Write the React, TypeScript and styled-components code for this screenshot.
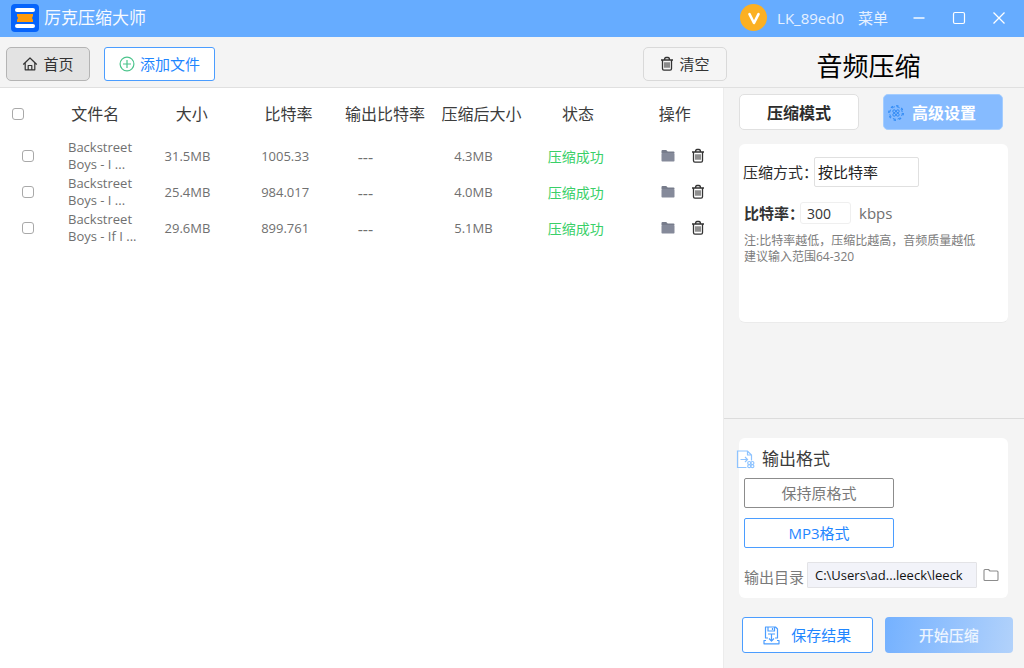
import React from "react";
import styled, { createGlobalStyle, css } from "styled-components";

const GlobalStyle = createGlobalStyle`
  *, *::before, *::after { box-sizing: border-box; }
  body { margin: 0; background: #f4f4f4; }
  body, button, input, select {
    font-family: "Open Sans", "Noto Sans CJK SC", sans-serif;
  }
  button { cursor: pointer; }
  svg { display: block; flex: none; }
`;

const blue = "#1f86ff";

const Window = styled.div`
  display: flex;
  flex-direction: column;
  min-height: 100vh;
`;

const TitleBar = styled.header`
  display: flex;
  align-items: center;
  height: 37px;
  padding: 0 17px 2px 11px;
  background: #66acff;
  color: #fff;
`;

const AppName = styled.span`
  margin: 0 auto 0 5px;
  font-size: 17px;
  line-height: 24px;
  opacity: 0.95;
`;

const Avatar = styled.span`
  display: grid;
  place-items: center;
  width: 27px;
  height: 27px;
  margin-right: 10px;
  border-radius: 50%;
  background: #fbb023;
`;

const Account = styled.span`
  font-size: 15px;
  line-height: 20px;
  color: #e6f1ff;
`;

const MenuButton = styled.button`
  margin: 0 23px 0 14px;
  padding: 0;
  border: 0;
  background: none;
  color: #e6f1ff;
  font-size: 15px;
  line-height: 20px;
`;

const WindowControls = styled.div`
  display: flex;
  gap: 24px;
`;

const WindowButton = styled.button`
  display: grid;
  place-items: center;
  width: 16px;
  height: 16px;
  padding: 0;
  border: 0;
  background: none;
  color: #fff;
`;

const Toolbar = styled.div`
  display: flex;
  align-items: center;
  height: 51px;
  padding: 4px 0 0 6px;
  border-bottom: 1px solid #e0e0e0;
  background: #f4f4f4;
`;

const ToolButton = styled.button<{ $kind: "active" | "outline" | "plain" }>`
  display: flex;
  align-items: center;
  justify-content: center;
  gap: 5px;
  min-width: 84px;
  height: 34px;
  padding: 0 14px;
  border: 1px solid #d9d9d9;
  border-radius: 5px;
  background: #f5f5f5;
  color: #333;
  font-size: 15px;
  line-height: 20px;
  ${(p) =>
    p.$kind === "active" &&
    css`
      border-color: #b4b4b4;
      background: #e3e3e3;
    `}
  ${(p) =>
    p.$kind === "outline" &&
    css`
      margin: 0 auto 0 14px;
      border-color: #4b9dff;
      border-radius: 3px;
      background: #fff;
      color: ${blue};
    `}
`;

const PageTitle = styled.h1`
  width: 297px;
  margin: 0;
  padding: 4px 14px 0 0;
  text-align: center;
  color: #000;
  font-size: 26px;
  font-weight: 400;
  line-height: 36px;
`;

const Body = styled.div`
  display: flex;
  flex: 1;
`;

const Files = styled.main`
  flex: 1;
  min-width: 0;
  background: #fff;
`;

const FileTable = styled.table`
  width: 100%;
  border-collapse: collapse;
  table-layout: fixed;
`;

const HeadCell = styled.th`
  height: 50px;
  padding: 2px 0 0;
  color: #3c3c3c;
  font-size: 16px;
  font-weight: 400;
  line-height: 24px;
  white-space: nowrap;
`;

const CheckHead = styled(HeadCell)`
  width: 47px;
  padding-left: 12px;
  text-align: left;
`;

const Cell = styled.td<{ $done?: boolean }>`
  height: 36px;
  padding: 0 0 0 ${(p) => (p.$done ? "18px" : "21px")};
  color: ${(p) => (p.$done ? "#39d068" : "#707070")};
  font-size: ${(p) => (p.$done ? "14px" : "13px")};
  line-height: 17px;
  white-space: nowrap;
`;

const EmptyCell = styled(Cell)`
  padding-top: 2px;
  font-size: 16px;
`;

const CheckCell = styled(Cell)`
  padding-left: 22px;
`;

const Checkbox = styled.input`
  display: block;
  appearance: none;
  width: 12px;
  height: 12px;
  margin: 0;
  border: 1px solid #a9a9a9;
  border-radius: 3px;
  background: #fff;
  &:checked { background: ${blue}; }
`;

const FileName = styled.span`
  display: block;
  width: 74px;
  white-space: normal;
`;

const Actions = styled.div`
  display: flex;
  gap: 14px;
  padding-left: 13px;
`;

const IconButton = styled.button`
  display: grid;
  place-items: center;
  width: 16px;
  height: 16px;
  padding: 0;
  border: 0;
  background: none;
  color: #333;
`;

const Sidebar = styled.aside`
  display: flex;
  flex-direction: column;
  width: 301px;
  border-left: 1px solid #ececec;
  background: #f4f4f4;
`;

const Settings = styled.section`
  display: flex;
  flex-direction: column;
  gap: 14px;
  min-height: 331px;
  padding: 6px 16px 16px 15px;
  border-bottom: 1px solid #dcdcdc;
`;

const Tabs = styled.div`
  display: flex;
  justify-content: space-between;
  padding-right: 5px;
`;

const Tab = styled.button<{ $active?: boolean }>`
  display: flex;
  align-items: center;
  justify-content: center;
  gap: 8px;
  width: 120px;
  height: 36px;
  padding: 2px 0 0;
  border: 1px solid ${(p) => (p.$active ? "#a4cdff" : "#e0e0e0")};
  border-radius: 5px;
  background: ${(p) => (p.$active ? "#86bbff" : "#fff")};
  color: ${(p) => (p.$active ? "#fff" : "#2c2c2c")};
  font-size: 16px;
  font-weight: 700;
  line-height: 24px;
  ${(p) => p.$active && "padding-right: 22px;"}
`;

const Card = styled.div`
  border-radius: 6px;
  background: #fff;
`;

const SettingsCard = styled(Card)`
  min-height: 179px;
  padding: 13px 4px;
  border-bottom: 1px solid #ebebeb;
`;

const Field = styled.div`
  display: flex;
  align-items: center;
`;

const MethodLabel = styled.label`
  width: 71px;
  color: #2c2c2c;
  font-size: 15px;
  line-height: 24px;
  white-space: nowrap;
`;

const MethodSelect = styled.select`
  appearance: none;
  width: 105px;
  height: 30px;
  padding: 0 3px;
  border: 1px solid #e0e0e0;
  border-radius: 2px;
  background: #fff;
  color: #222;
  font-size: 15px;
`;

const RateField = styled(Field)`
  margin-top: 15px;
  padding-left: 1px;
`;

const RateLabel = styled.label`
  width: 56px;
  color: #333;
  font-size: 15px;
  font-weight: 700;
  line-height: 22px;
  white-space: nowrap;
`;

const RateInput = styled.input`
  width: 51px;
  height: 22px;
  margin-right: 8px;
  padding: 0 6px;
  border: 1px solid #efefef;
  border-radius: 3px;
  background: #fff;
  color: #333;
  font-size: 14px;
`;

const Unit = styled.span`
  color: #707070;
  font-size: 15px;
  line-height: 22px;
`;

const Note = styled.p`
  margin: 9px 0 0 1px;
  color: #7c7c7c;
  font-size: 12px;
  line-height: 16px;
  white-space: nowrap;
`;

const Output = styled.section`
  padding: 19px 11px 15px 15px;
`;

const OutputCard = styled(Card)`
  margin-right: 5px;
  padding: 8px 9px 10px 5px;
`;

const OutputHeading = styled.h2`
  display: flex;
  align-items: center;
  gap: 7px;
  margin: 0 0 6px -8px;
  color: #3c3c3c;
  font-size: 17px;
  font-weight: 400;
  line-height: 26px;
`;

const FormatButton = styled.button<{ $selected?: boolean }>`
  display: block;
  width: 150px;
  height: 30px;
  margin-bottom: 10px;
  padding: 0;
  border: 1px solid ${(p) => (p.$selected ? "#4b9dff" : "#8c8c8c")};
  border-radius: 2px;
  background: #fff;
  color: ${(p) => (p.$selected ? blue : "#7a7a7a")};
  font-size: 15px;
  line-height: 20px;
`;

const PathField = styled(Field)`
  margin-top: 14px;
`;

const PathLabel = styled.label`
  width: 63px;
  padding-top: 4px;
  color: #7a7a7a;
  font-size: 15px;
  line-height: 22px;
  white-space: nowrap;
`;

const PathInput = styled.input`
  flex: 1;
  min-width: 0;
  height: 26px;
  margin-right: 6px;
  padding: 0 7px;
  border: 1px solid #e3e3e6;
  border-radius: 1px;
  background: #f2f3f9;
  color: #111;
  font-size: 13px;
`;

const Footer = styled.div`
  display: flex;
  gap: 12px;
  margin: 19px 0 0 3px;
`;

const FooterButton = styled.button<{ $primary?: boolean }>`
  display: flex;
  flex: 1;
  align-items: center;
  justify-content: center;
  gap: 11px;
  height: 36px;
  padding: 0;
  border: 1px solid #4b9dff;
  border-radius: 3px;
  background: #fff;
  color: ${blue};
  font-size: 15px;
  line-height: 20px;
  ${(p) =>
    p.$primary &&
    css`
      border: 0;
      border-radius: 4px;
      background: linear-gradient(100deg, #74b1ff, #b2d2fb);
      color: #edf5ff;
      font-weight: 500;
    `}
`;

const LogoIcon = () => (
  <svg width="28" height="28" viewBox="0 0 28 28" aria-hidden="true">
    <rect width="28" height="28" rx="4" fill="#0664fb" />
    <rect x="4" y="4" width="20" height="4" rx="2" fill="#fff" />
    <rect x="4" y="20" width="20" height="4" rx="2" fill="#fff" />
    <path d="M6 10h16v2l-1 2 1 2v2H6v-2l1-2-1-2z" fill="#ff9a0a" />
  </svg>
);

const BadgeIcon = () => (
  <svg width="14" height="14" viewBox="0 0 14 14" fill="none" stroke="#fff" strokeWidth="2.600" strokeLinecap="round" strokeLinejoin="round" aria-hidden="true">
    <path d="M2.500 3.200 7 12 11.500 3.200" />
  </svg>
);

const HomeIcon = () => (
  <svg width="16" height="16" viewBox="0 0 16 16" fill="none" stroke="#333" strokeWidth="1.2" strokeLinejoin="round" strokeLinecap="round" aria-hidden="true">
    <path d="M1.500 8.200 8 2l6.500 6.200M3.200 7v6.800h9.600V7M6.200 13.500V9.500h3.600v4" />
  </svg>
);

const AddIcon = () => (
  <svg width="16" height="16" viewBox="0 0 16 16" fill="none" stroke="#4cc48c" strokeWidth="1.200" aria-hidden="true">
    <circle cx="8" cy="8" r="6.900" />
    <path d="M8 4v8M4 8h8" />
  </svg>
);

const TrashIcon = () => (
  <svg width="14" height="16" viewBox="0 0 14 16" fill="none" stroke="#333" strokeWidth="1.300" strokeLinejoin="round" aria-hidden="true">
    <path d="M1 4h12M4.500 3.800q0-2.300 1.500-2.300h2q1.500 0 1.500 2.300M2.500 4v8.800q0 1.400 1.400 1.400h6.200q1.400 0 1.400-1.400V4" />
    <path d="M5 6.300v5.500M7 6.300v5.500M9 6.300v5.500" strokeWidth="1.100" />
  </svg>
);

const FolderIcon = () => (
  <svg width="14" height="14" viewBox="0 0 14 14" aria-hidden="true">
    <path d="M.5 2q0-1 1-1h3.700l1.500 1.600h5.800q1 0 1 1V4H.5z" fill="#777c8b" />
    <rect x=".5" y="4" width="13" height="8.500" rx=".8" fill="#858a9a" />
  </svg>
);

const BrowseIcon = () => (
  <svg width="16" height="14" viewBox="0 0 16 14" fill="none" stroke="#8c8c8c" strokeWidth="1.100" strokeLinejoin="round" aria-hidden="true">
    <path d="M1 2.500q0-1 1-1h3.500l1.500 1.500h7q1 0 1 1v7.500q0 1-1 1H2q-1 0-1-1z" />
  </svg>
);

const GearIcon = () => (
  <svg width="16" height="16" viewBox="0 0 16 16" fill="none" stroke="#2f8af5" aria-hidden="true">
    <circle cx="8" cy="8" r="6.300" strokeWidth="1" strokeDasharray="3 1.950" />
    <circle cx="8" cy="8" r="7.300" strokeWidth="1.200" strokeDasharray="2.300 3.430" />
    <circle cx="6.200" cy="6.200" r="1.400" />
    <circle cx="9.800" cy="6.200" r="1.400" />
    <circle cx="6.200" cy="9.800" r="1.400" />
    <circle cx="9.800" cy="9.800" r="1.400" />
  </svg>
);

const ExportIcon = () => (
  <svg width="19" height="19" viewBox="0 0 19 19" fill="none" stroke="#8ec3ff" strokeWidth="1.200" aria-hidden="true">
    <path d="M10.500 17.500H1.500V1h10l4 4v5.500M11.500 1v4h4" />
    <path d="M4.500 9.500h6.500M9 7l2.500 2.500L9 12" />
    <circle cx="13.200" cy="13" r="1.500" />
    <circle cx="16.400" cy="13" r="1.500" />
    <circle cx="13.200" cy="16.200" r="1.500" />
    <circle cx="16.400" cy="16.200" r="1.500" />
  </svg>
);

const SaveIcon = () => (
  <svg width="17" height="19" viewBox="0 0 17 19" fill="none" stroke="#4b9dff" strokeWidth="1.200" strokeLinejoin="round" aria-hidden="true">
    <path d="M5 12H2.500V1h10l2 2v9H12M5 1v4h6.500V1M9.500 2v2M5 8h7" />
    <path d="M8.500 8v7M6 12.500 8.500 15l2.500-2.500M3 14.500H1v3.300h15v-3.300h-2" />
  </svg>
);

const MinimizeIcon = () => (
  <svg width="14" height="14" viewBox="0 0 14 14" stroke="currentColor" strokeWidth="1.400" aria-hidden="true">
    <path d="M1.500 7h11" />
  </svg>
);

const MaximizeIcon = () => (
  <svg width="14" height="14" viewBox="0 0 14 14" fill="none" stroke="currentColor" strokeWidth="1.200" aria-hidden="true">
    <rect x="1.500" y="1.500" width="11" height="11" rx="1.500" />
  </svg>
);

const CloseIcon = () => (
  <svg width="14" height="14" viewBox="0 0 14 14" stroke="currentColor" strokeWidth="1.300" aria-hidden="true">
    <path d="M1.500 1.500l11 11M12.500 1.500l-11 11" />
  </svg>
);

const columns = ["文件名", "大小", "比特率", "输出比特率", "压缩后大小", "状态", "操作"];

const files = [
  { name: "Backstreet Boys - I ...", size: "31.5MB", rate: "1005.33", out: "4.3MB" },
  { name: "Backstreet Boys - I ...", size: "25.4MB", rate: "984.017", out: "4.0MB" },
  { name: "Backstreet Boys - If I ...", size: "29.6MB", rate: "899.761", out: "5.1MB" },
];

export default function App() {
  return (
    <Window>
      <GlobalStyle />
      <TitleBar>
        <LogoIcon />
        <AppName>厉克压缩大师</AppName>
        <Avatar><BadgeIcon /></Avatar>
        <Account>LK_89ed0</Account>
        <MenuButton type="button">菜单</MenuButton>
        <WindowControls>
          <WindowButton type="button" aria-label="最小化"><MinimizeIcon /></WindowButton>
          <WindowButton type="button" aria-label="最大化"><MaximizeIcon /></WindowButton>
          <WindowButton type="button" aria-label="关闭"><CloseIcon /></WindowButton>
        </WindowControls>
      </TitleBar>

      <Toolbar>
        <ToolButton type="button" $kind="active"><HomeIcon />首页</ToolButton>
        <ToolButton type="button" $kind="outline"><AddIcon />添加文件</ToolButton>
        <ToolButton type="button" $kind="plain"><TrashIcon />清空</ToolButton>
        <PageTitle>音频压缩</PageTitle>
      </Toolbar>

      <Body>
        <Files>
          <FileTable>
            <thead>
              <tr>
                <CheckHead scope="col"><Checkbox type="checkbox" aria-label="全选" /></CheckHead>
                {columns.map((c) => <HeadCell key={c} scope="col">{c}</HeadCell>)}
              </tr>
            </thead>
            <tbody>
              {files.map((f) => (
                <tr key={f.rate}>
                  <CheckCell><Checkbox type="checkbox" aria-label={f.name} /></CheckCell>
                  <Cell><FileName>{f.name}</FileName></Cell>
                  <Cell>{f.size}</Cell>
                  <Cell>{f.rate}</Cell>
                  <EmptyCell>---</EmptyCell>
                  <Cell>{f.out}</Cell>
                  <Cell $done>压缩成功</Cell>
                  <Cell>
                    <Actions>
                      <IconButton type="button" aria-label="打开文件夹"><FolderIcon /></IconButton>
                      <IconButton type="button" aria-label="删除"><TrashIcon /></IconButton>
                    </Actions>
                  </Cell>
                </tr>
              ))}
            </tbody>
          </FileTable>
        </Files>

        <Sidebar>
          <Settings>
            <Tabs>
              <Tab type="button">压缩模式</Tab>
              <Tab type="button" $active><GearIcon />高级设置</Tab>
            </Tabs>
            <SettingsCard>
              <Field>
                <MethodLabel htmlFor="method">压缩方式：</MethodLabel>
                <MethodSelect id="method" defaultValue="rate">
                  <option value="rate">按比特率</option>
                </MethodSelect>
              </Field>
              <RateField>
                <RateLabel htmlFor="rate">比特率：</RateLabel>
                <RateInput id="rate" type="text" defaultValue="300" />
                <Unit>kbps</Unit>
              </RateField>
              <Note>注:比特率越低，压缩比越高，音频质量越低<br />建议输入范围64-320</Note>
            </SettingsCard>
          </Settings>

          <Output>
            <OutputCard>
              <OutputHeading><ExportIcon />输出格式</OutputHeading>
              <FormatButton type="button">保持原格式</FormatButton>
              <FormatButton type="button" $selected>MP3格式</FormatButton>
              <PathField>
                <PathLabel htmlFor="path">输出目录</PathLabel>
                <PathInput id="path" type="text" readOnly value="C:\Users\ad...leeck\leeck" />
                <IconButton type="button" aria-label="选择目录"><BrowseIcon /></IconButton>
              </PathField>
            </OutputCard>
            <Footer>
              <FooterButton type="button"><SaveIcon />保存结果</FooterButton>
              <FooterButton type="button" $primary>开始压缩</FooterButton>
            </Footer>
          </Output>
        </Sidebar>
      </Body>
    </Window>
  );
}
